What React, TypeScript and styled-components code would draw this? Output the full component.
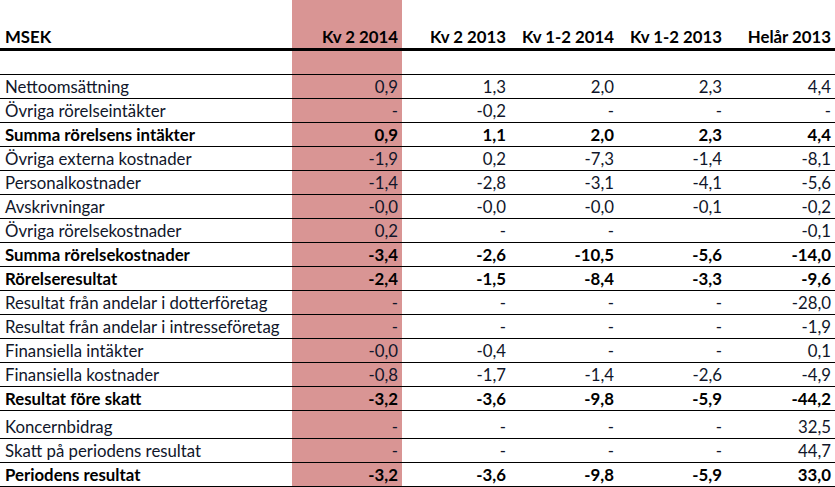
import React from "react";
import styled, { createGlobalStyle } from "styled-components";

const Global = createGlobalStyle`
  html, body { margin: 0; padding: 0; background: #ffffff; }
  body { font-family: Lato, "Open Sans", sans-serif; }
`;

const Table = styled.div`
  width: 835px;
  display: flex;
  flex-direction: column;
  font-family: Lato, "Open Sans", sans-serif;
  font-size: 16.8px;
  color: #141a2c;
`;

const COLS = "292px 110px 108px 108px 108px 1fr";

const Row = styled.div<{ $bold?: boolean; $height: number; $rule: number }>`
  display: grid;
  grid-template-columns: ${COLS};
  height: ${(p) => p.$height}px;
  border-bottom: ${(p) => p.$rule}px solid #000;
  font-weight: ${(p) => (p.$bold ? 700 : 400)};
  color: ${(p) => (p.$bold ? "#000" : "#10162a")};
`;

const Cell = styled.div<{ $num?: boolean; $hl?: boolean }>`
  display: flex;
  align-items: flex-end;
  justify-content: ${(p) => (p.$num ? "flex-end" : "flex-start")};
  padding: 0 ${(p) => (p.$num ? "4px" : "0")} 0 ${(p) => (p.$num ? "0" : "5px")};
  background: ${(p) => (p.$hl ? "#d99594" : "transparent")};
  line-height: 23px;
  white-space: nowrap;
`;

type Line = {
  label: string;
  v: string[];
  bold?: boolean;
  tall?: boolean;
};

const header = ["Kv 2 2014", "Kv 2 2013", "Kv 1-2 2014", "Kv 1-2 2013", "Helår 2013"];

const lines: Line[] = [
  { label: "Nettoomsättning", v: ["0,9", "1,3", "2,0", "2,3", "4,4"] },
  { label: "Övriga rörelseintäkter", v: ["-", "-0,2", "-", "-", "-"] },
  { label: "Summa rörelsens intäkter", v: ["0,9", "1,1", "2,0", "2,3", "4,4"], bold: true },
  { label: "Övriga externa kostnader", v: ["-1,9", "0,2", "-7,3", "-1,4", "-8,1"] },
  { label: "Personalkostnader", v: ["-1,4", "-2,8", "-3,1", "-4,1", "-5,6"] },
  { label: "Avskrivningar", v: ["-0,0", "-0,0", "-0,0", "-0,1", "-0,2"] },
  { label: "Övriga rörelsekostnader", v: ["0,2", "-", "-", "", "-0,1"] },
  { label: "Summa rörelsekostnader", v: ["-3,4", "-2,6", "-10,5", "-5,6", "-14,0"], bold: true },
  { label: "Rörelseresultat", v: ["-2,4", "-1,5", "-8,4", "-3,3", "-9,6"], bold: true },
  { label: "Resultat från andelar i dotterföretag", v: ["-", "-", "-", "-", "-28,0"] },
  { label: "Resultat från andelar i intresseföretag", v: ["-", "-", "-", "-", "-1,9"] },
  { label: "Finansiella intäkter", v: ["-0,0", "-0,4", "-", "-", "0,1"] },
  { label: "Finansiella kostnader", v: ["-0,8", "-1,7", "-1,4", "-2,6", "-4,9"] },
  { label: "Resultat före skatt", v: ["-3,2", "-3,6", "-9,8", "-5,9", "-44,2"], bold: true },
  { label: "Koncernbidrag", v: ["-", "-", "-", "-", "32,5"], tall: true },
  { label: "Skatt på periodens resultat", v: ["-", "-", "-", "-", "44,7"] },
  { label: "Periodens resultat", v: ["-3,2", "-3,6", "-9,8", "-5,9", "33,0"], bold: true },
];

export default function App() {
  return (
    <>
      <Global />
      <Table>
        <Row $bold $height={48} $rule={3}>
          <Cell>MSEK</Cell>
          {header.map((h, i) => (
            <Cell key={h} $num $hl={i === 0}>
              {h}
            </Cell>
          ))}
        </Row>
        <Row $height={23} $rule={1}>
          <Cell />
          {header.map((h, i) => (
            <Cell key={h} $num $hl={i === 0} />
          ))}
        </Row>
        {lines.map((l) => (
          <Row key={l.label} $bold={l.bold} $height={l.tall ? 27 : 23} $rule={1}>
            <Cell>{l.label}</Cell>
            {l.v.map((val, i) => (
              <Cell key={i} $num $hl={i === 0}>
                {val}
              </Cell>
            ))}
          </Row>
        ))}
      </Table>
    </>
  );
}
